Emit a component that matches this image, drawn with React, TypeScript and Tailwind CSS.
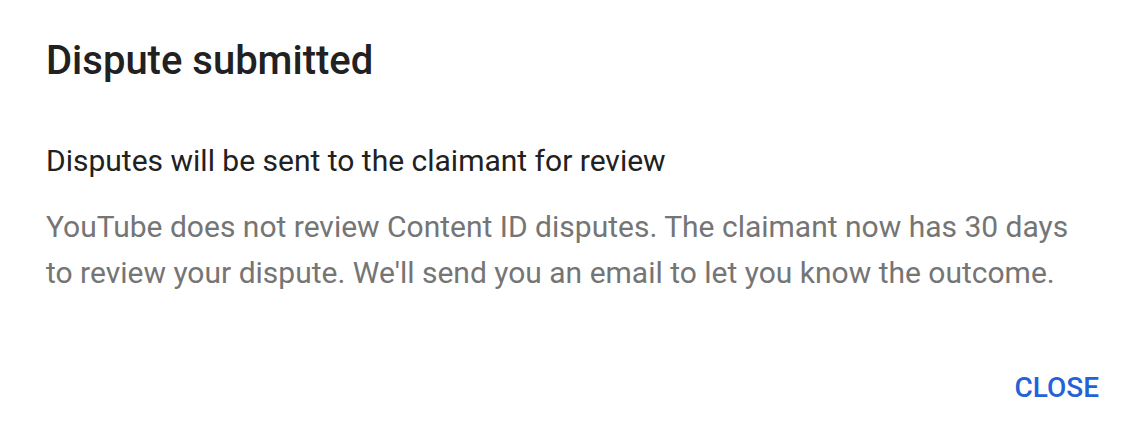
export default function App() {
  return (
    <div className="flex h-[430px] w-full flex-col bg-white font-['Roboto',sans-serif]">
      <h2 className="mt-[37px] px-[46px] text-[40px] font-medium leading-[48px] text-[#212121]">
        Dispute submitted
      </h2>
      <p className="mt-[58px] px-[46px] text-[30px] leading-[36px] text-[#212121]">
        Disputes will be sent to the claimant for review
      </p>
      <p className="mt-[25px] pl-[46px] pr-[60px] text-[30px] leading-[46px] text-[#757575]">
        YouTube does not review Content ID disputes. The claimant now has 30 days to review your
        dispute. We'll send you an email to let you know the outcome.
      </p>
      <div className="mt-auto flex justify-end px-[43px] pb-[24px]">
        <button className="text-[28px] font-medium leading-[36px] text-[#2463d6]">CLOSE</button>
      </div>
    </div>
  );
}
